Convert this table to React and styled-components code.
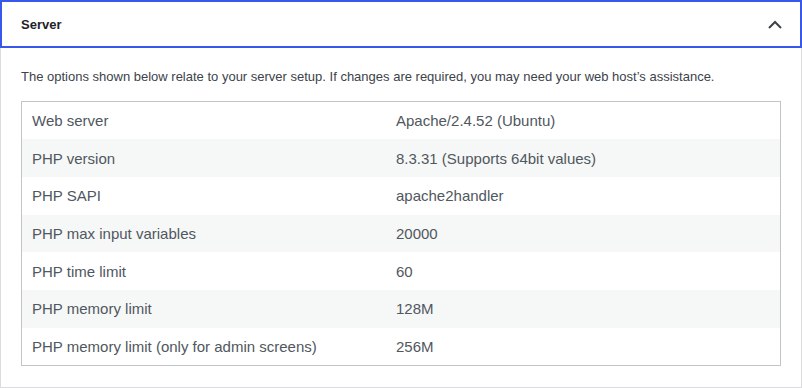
import React from 'react'
import styled, { createGlobalStyle } from 'styled-components';

const rows = [
  ['Web server', 'Apache/2.4.52 (Ubuntu)'],
  ['PHP version', '8.3.31 (Supports 64bit values)'],
  ['PHP SAPI', 'apache2handler'],
  ['PHP max input variables', '20000'],
  ['PHP time limit', '60'],
  ['PHP memory limit', '128M'],
  ['PHP memory limit (only for admin screens)', '256M'],
];

const ChevronUp = () => (
  <svg width="14" height="9" viewBox="0 0 14 9" fill="none">
    <path d="M1 8L7 2L13 8" stroke="#3c434a" strokeWidth="2" />
  </svg>
);

const App = () => {
  return (
    <>
      <GlobalStyle />
      <Panel>
        <Header>
          <Title>Server</Title>
          <ChevronUp />
        </Header>
        <Body>
          <Description>
            The options shown below relate to your server setup. If changes are required, you may need your web host’s assistance.
          </Description>
          <Table>
            <tbody>
              {rows.map(([label, value], i) => (
                <Row key={label} striped={i % 2 === 1}>
                  <LabelCell>{label}</LabelCell>
                  <ValueCell>{value}</ValueCell>
                </Row>
              ))}
            </tbody>
          </Table>
        </Body>
      </Panel>
    </>
  )
}

export default App;

const GlobalStyle = createGlobalStyle`
  body {
    margin: 0;
    background: #fff;
    font-family: "Liberation Sans", Arial, sans-serif;
  }
`;

const Panel = styled.div`
  width: 802px;
  height: 388px;
  box-sizing: border-box;
  background: #fff;
`;

const Header = styled.div`
  height: 48px;
  box-sizing: border-box;
  border: 2px solid #3858e9;
  display: flex;
  align-items: center;
  justify-content: space-between;
  padding: 0 18px 0 19px;
`;

const Title = styled.span`
  font-size: 13px;
  font-weight: 700;
  color: #1d2327;
`;

const Body = styled.div`
  height: 340px;
  box-sizing: border-box;
  border: 1px solid #dcdcde;
  border-top: none;
  padding: 0 20px 20px;
`;

const Description = styled.p`
  margin: 0;
  padding-top: 19px;
  line-height: 20px;
  font-size: 13px;
  color: #3c434a;
  margin-bottom: 14px;
`;

const Table = styled.table`
  width: 100%;
  border-collapse: collapse;
  border: 1px solid #c3c4c7;
  font-size: 15px;
  color: #50575e;
`;

const Row = styled.tr`
  height: 37.7px;
  background: ${p => (p.striped ? '#f6f7f7' : '#fff')};
`;

const LabelCell = styled.td`
  width: 354px;
  padding: 0 0 0 10px;
  vertical-align: middle;
`;

const ValueCell = styled.td`
  padding: 0 0 0 10px;
  vertical-align: middle;
`;
